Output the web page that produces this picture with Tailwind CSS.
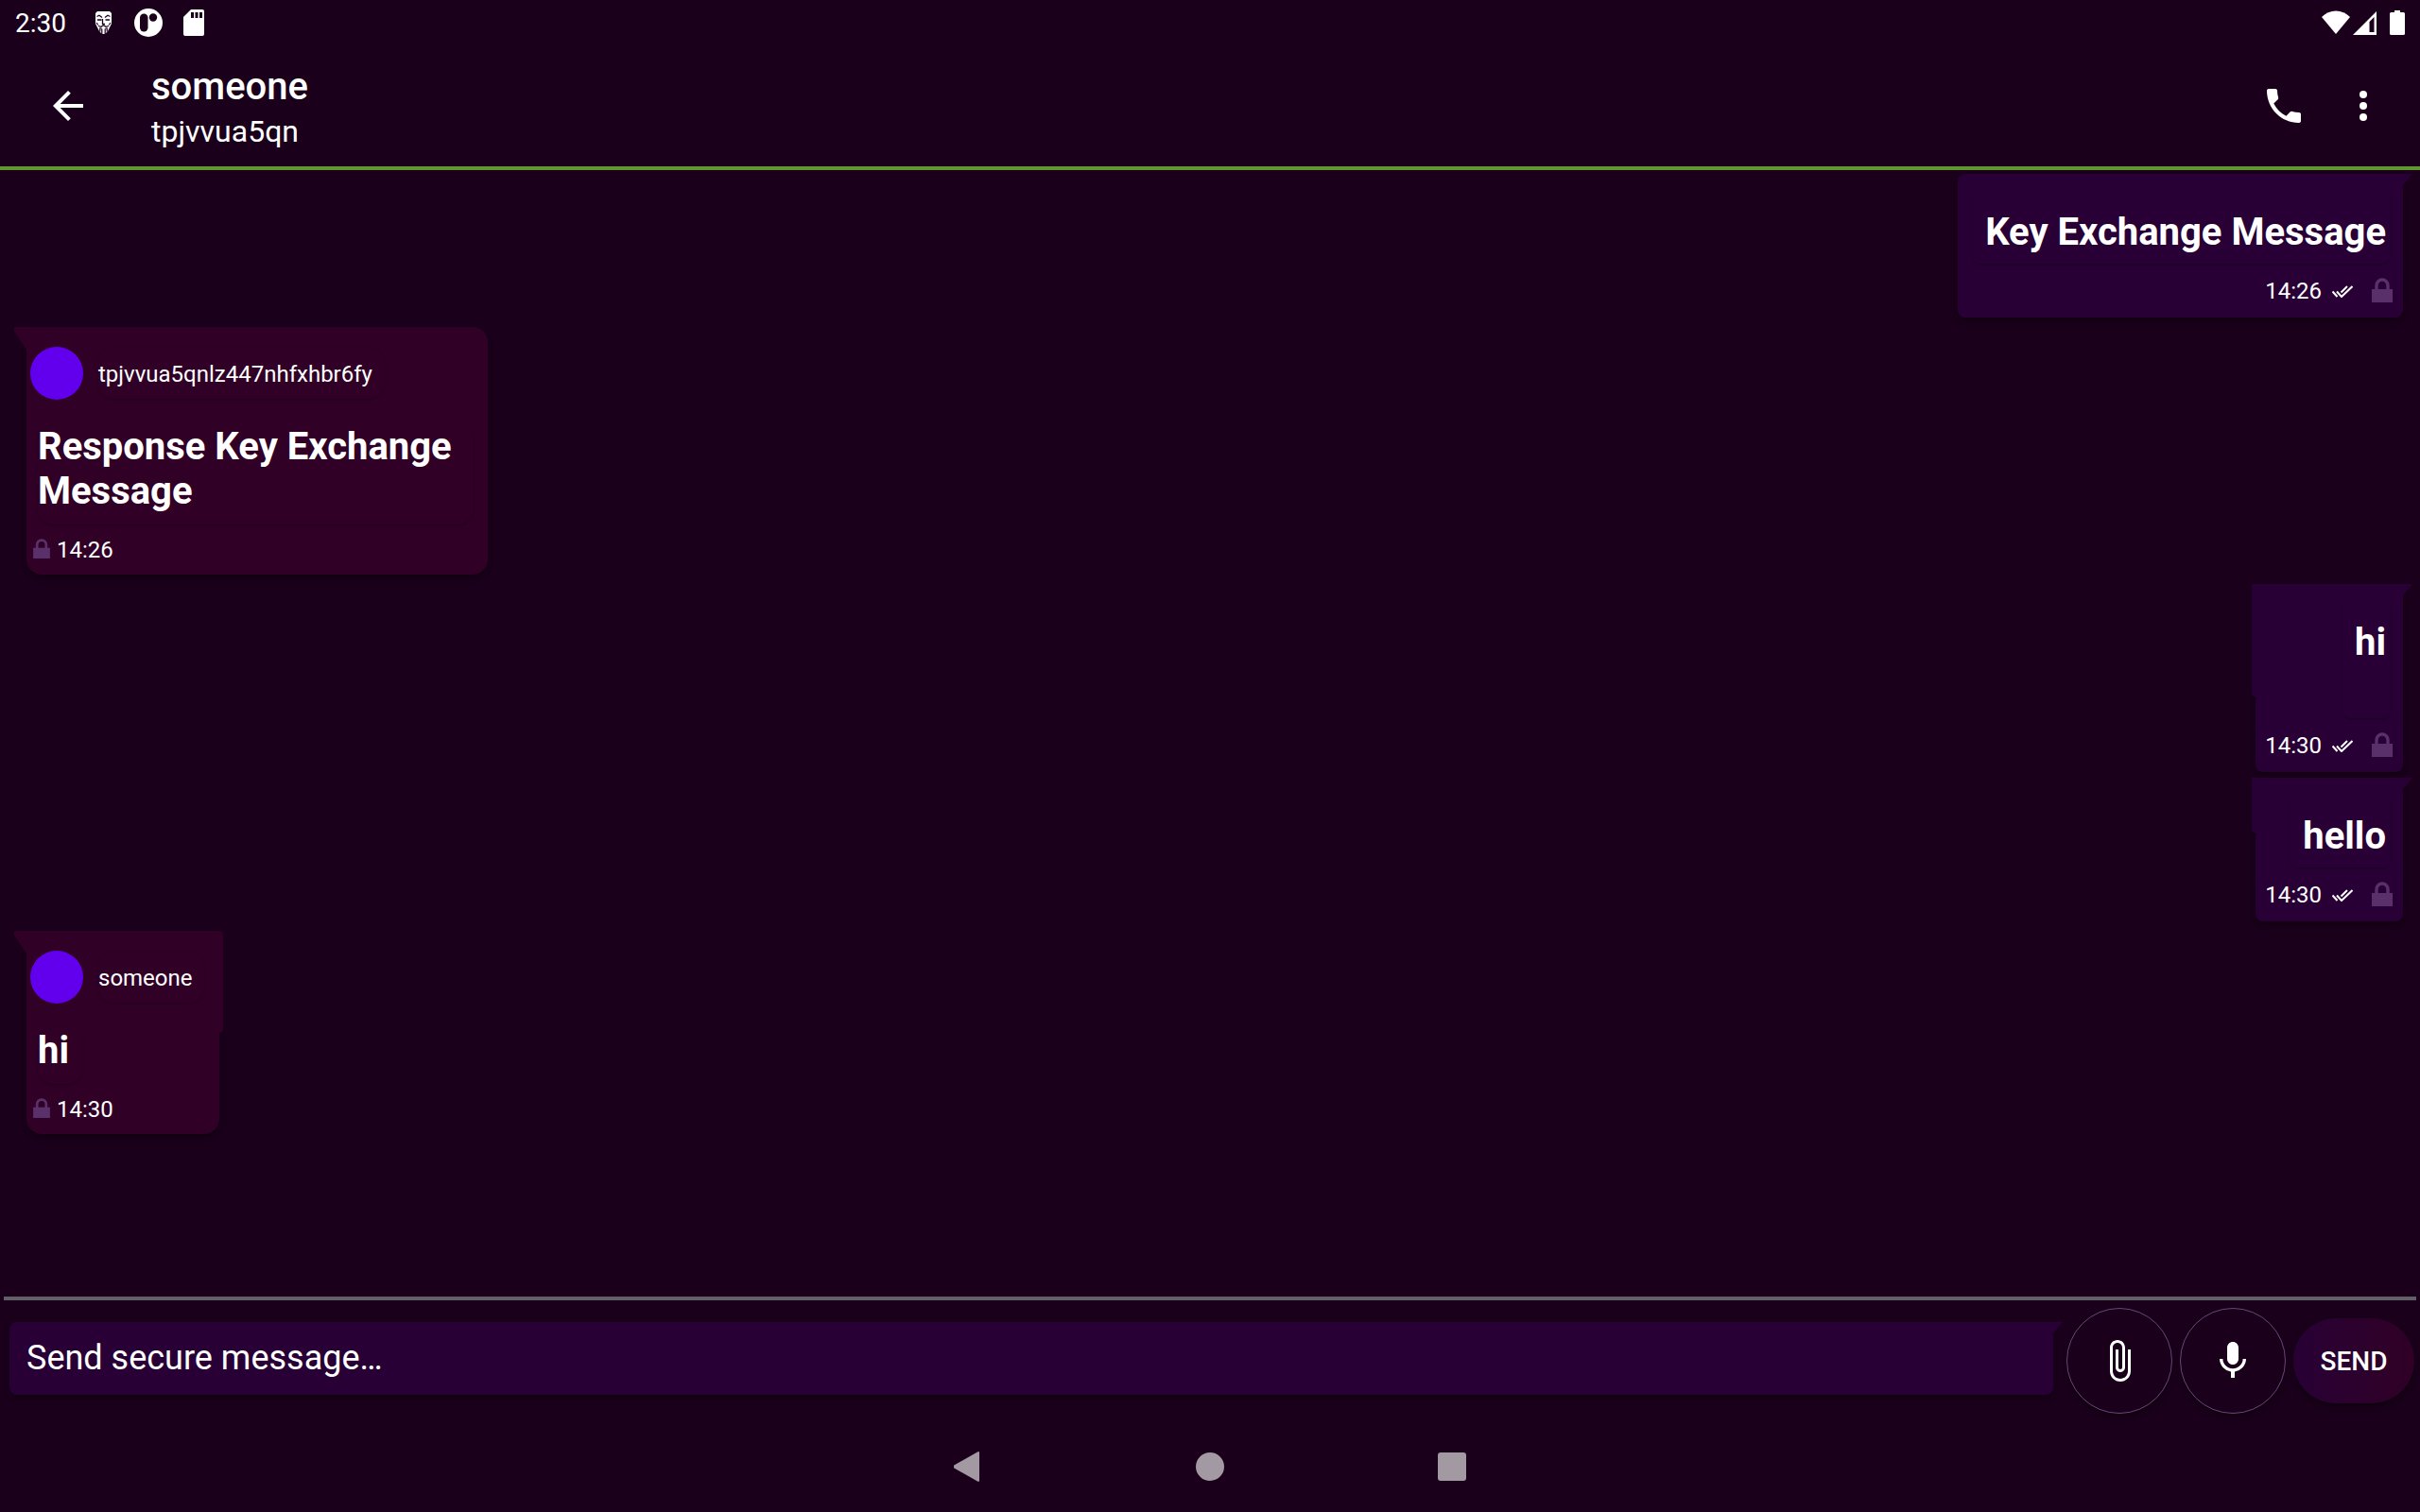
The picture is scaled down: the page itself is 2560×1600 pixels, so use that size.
<!DOCTYPE html>
<html lang="en">
<head>
<meta charset="utf-8">
<meta name="viewport" content="width=device-width, initial-scale=1">
<title>someone</title>
<script src="https://cdn.jsdelivr.net/npm/@tailwindcss/browser@4"></script>
</head>
<body class="bg-[#1a001b] text-white font-[Roboto,sans-serif]">
<svg class="hidden" aria-hidden="true">
  <symbol id="lock" viewBox="0 0 22 26"><path d="M0 12h22v14H0z"/><path d="M5 13V8a6 6 0 0 1 12 0v5" fill="none" stroke="currentColor" stroke-width="3.4"/></symbol>
  <symbol id="ticks" viewBox="0 0 22 13"><path d="M.5 6.500l5 5.500M5 6.500l5 5.500L21.500 1M9.500 7.500L16 1" fill="none" stroke="currentColor" stroke-width="2"/></symbol>
</svg>
<div class="min-h-screen flex flex-col">

  <div class="h-12 px-4 flex items-center justify-between">
    <div class="flex items-center">
      <time class="pt-[2px] text-[28px] leading-8 w-[85px]">2:30</time>
      <svg class="w-[17px] h-6 mr-6" viewBox="0 0 17 24" role="img" aria-label="Secure service"><path fill="#fff" d="M2 0h13l2 2v11l-2 4-2 4-3 3H7l-3-3-2-4-2-4V2z"/><g fill="none" stroke="#1a001b"><path stroke-width="1.300" d="M1.500 5.500L4 4.200l3 2.300M15.500 5.500L13 4.200l-3 2.300M2 9h4.500M10.500 9H15M7.500 8v5.500h2.500"/><path stroke-width="1.200" d="M1 12l2 2.500M16 12l-2 2.500M3 15.500l3 .8 2.500-1.500 2.500 1.500 3-.8M4 18.200h2.500M10.500 18.200H13M6.800 18.500V24M10.200 18.500V24M4.800 19v2.500M12.200 19v2.500"/></g></svg>
      <svg class="w-[30px] h-[30px] mr-[22px]" viewBox="0 0 30 30" role="img" aria-label="App notification"><circle cx="15" cy="15" r="15" fill="#fff"/><rect x="6" y="5.500" width="8.500" height="19" rx="4.200" fill="#1a001b"/><circle cx="20" cy="9.500" r="4.200" fill="#1a001b"/></svg>
      <svg class="w-[22px] h-7" viewBox="0 0 22 28" role="img" aria-label="SD card"><path d="M8 0h12a2 2 0 0 1 2 2v24a2 2 0 0 1-2 2H2a2 2 0 0 1-2-2V8z" fill="#fff"/><path d="M8 3h3v6H8zM12.500 3h3v6h-3zM17 3h3v6h-3z" fill="#1a001b"/></svg>
    </div>
    <div class="flex items-center">
      <svg class="w-[30px] h-[26px] mr-[3px]" viewBox="0 0 30 26" fill="#fff" role="img" aria-label="Wi-Fi"><path d="M15 25L0 7Q6.500 .5 15 .5T30 7z"/></svg>
      <svg class="w-[25px] h-[26px] mr-[14px]" viewBox="0 0 25 26" fill="#fff" role="img" aria-label="Signal"><path fill-rule="evenodd" d="M25 1v25H0zM22.500 7l-5 5v11h5z"/></svg>
      <svg class="w-4 h-[26px]" viewBox="0 0 16 26" fill="#fff" role="img" aria-label="Battery"><path d="M5 0h6v2h3.500a1.500 1.500 0 0 1 1.500 1.500v21a1.500 1.500 0 0 1-1.500 1.500h-13A1.500 1.500 0 0 1 0 24.500v-21A1.500 1.500 0 0 1 1.500 2H5z"/></svg>
    </div>
  </div>

  <header class="h-[132px] border-b-4 border-[#5f962f] pl-12 pr-9 flex items-center">
    <button class="w-12 h-12 mr-16" aria-label="Back"><svg class="w-12 h-12" viewBox="0 0 24 24" fill="#fff"><path d="M20 11H7.830l5.590-5.590L12 4l-8 8 8 8 1.410-1.410L7.830 13H20v-2z"/></svg></button>
    <div class="flex-1 pt-1">
      <h1 class="text-[40px] leading-[50px] font-medium">someone</h1>
      <p class="text-[32px] leading-[44px]">tpjvvua5qn</p>
    </div>
    <button class="w-12 h-12 mr-9" aria-label="Call"><svg class="w-12 h-12" viewBox="0 0 24 24" fill="#fff"><path d="M6.620 10.790c1.440 2.830 3.760 5.140 6.590 6.590l2.200-2.200c.27-.27.67-.36 1.020-.24 1.120.37 2.330.57 3.570.57.55 0 1 .45 1 1V20c0 .55-.45 1-1 1-9.390 0-17-7.610-17-17 0-.55.45-1 1-1h3.500c.55 0 1 .45 1 1 0 1.250.2 2.450.57 3.570.11.35.03.74-.25 1.020l-2.200 2.200z"/></svg></button>
    <button class="w-12 h-12" aria-label="More options"><svg class="w-12 h-12" viewBox="0 0 24 24" fill="#fff"><circle cx="12" cy="6" r="2"/><circle cx="12" cy="12" r="2"/><circle cx="12" cy="18" r="2"/></svg></button>
  </header>

  <main class="flex-1 flex flex-col items-start gap-[10px] pt-1 pl-7 pr-[18px]">
    <article class="self-end relative flex flex-col items-end rounded-b-lg rounded-tl-lg bg-[#280035] pt-[18px] pb-[14px] pl-4 shadow-md shadow-black/30">
      <span class="absolute top-0 left-full w-[10px] h-3 bg-[#280035] [clip-path:polygon(0_0,100%_0,0_100%)]"></span>
      <p class="mr-[14px] rounded-lg pt-5 pb-[10px] pl-[13px] pr-1 text-[40px] leading-[47px] font-bold text-right shadow-sm shadow-black/20">Key Exchange Message</p>
      <footer class="mt-[15px] pr-[11px] flex items-center text-2xl leading-7">
        <time>14:26</time>
        <svg class="w-[22px] h-[13px] ml-[11px] mr-5" role="img" aria-label="Delivered"><use href="#ticks"/></svg>
        <svg class="w-[22px] h-[26px] mb-[2px] text-[#5a306b] fill-current" role="img" aria-label="Encrypted"><use href="#lock"/></svg>
      </footer>
    </article>

    <article class="relative w-[488px] rounded-b-2xl rounded-tr-2xl bg-[#300026] pt-[21px] pb-3 shadow-md shadow-black/30">
      <span class="absolute top-0 right-full w-[13px] h-6 bg-[#300026] [clip-path:polygon(0_0,100%_0,100%_100%,0_20%)]"></span>
      <div class="pl-1 flex items-center text-2xl leading-7"><span class="size-14 mr-4 rounded-full bg-[#6200ee]"></span><span class="rounded-2xl pt-[14px] pb-3 pr-3 shadow-sm shadow-black/20">tpjvvua5qnlz447nhfxhbr6fy</span></div>
      <p class="mt-[26px] ml-3 mr-4 pb-3 rounded-2xl text-[40px] leading-[47px] font-bold shadow-sm shadow-black/20">Response Key Exchange Message</p>
      <footer class="mt-[13px] pl-[7px] flex items-center gap-[7px] text-2xl leading-7">
        <svg class="w-[18px] h-[21px] mb-1 text-[#5a306b] fill-current" viewBox="0 0 22 26" role="img" aria-label="Encrypted"><use href="#lock"/></svg>
        <time>14:26</time>
      </footer>
    </article>

    <div class="self-end flex flex-col items-end gap-[6px]">
      <article class="relative w-[156px] flex flex-col items-end rounded-b-lg bg-[#280035] pt-[18px] pb-[14px] shadow-md shadow-black/30">
        <span class="absolute top-0 left-full w-[10px] h-3 bg-[#280035] [clip-path:polygon(0_0,100%_0,0_100%)]"></span>
        <span class="absolute top-0 right-full w-1 h-[119px] rounded-bl bg-[#280035]"></span>
        <p class="mr-[14px] rounded-lg pt-5 pb-[57px] pl-[13px] pr-1 text-[40px] leading-[47px] font-bold text-right shadow-sm shadow-black/20">hi</p>
        <footer class="mt-[15px] pr-[11px] flex items-center text-2xl leading-7">
          <time>14:30</time>
          <svg class="w-[22px] h-[13px] ml-[11px] mr-5" role="img" aria-label="Delivered"><use href="#ticks"/></svg>
          <svg class="w-[22px] h-[26px] mb-[2px] text-[#5a306b] fill-current" role="img" aria-label="Encrypted"><use href="#lock"/></svg>
        </footer>
      </article>
      <article class="relative w-[156px] flex flex-col items-end rounded-b-lg bg-[#280035] pt-[18px] pb-[14px] shadow-md shadow-black/30">
        <span class="absolute top-0 left-full w-[10px] h-3 bg-[#280035] [clip-path:polygon(0_0,100%_0,0_100%)]"></span>
        <span class="absolute top-0 right-full w-1 h-[58px] rounded-bl bg-[#280035]"></span>
        <p class="mr-[14px] rounded-lg pt-5 pb-[10px] pl-[13px] pr-1 text-[40px] leading-[47px] font-bold text-right shadow-sm shadow-black/20">hello</p>
        <footer class="mt-[15px] pr-[11px] flex items-center text-2xl leading-7">
          <time>14:30</time>
          <svg class="w-[22px] h-[13px] ml-[11px] mr-5" role="img" aria-label="Delivered"><use href="#ticks"/></svg>
          <svg class="w-[22px] h-[26px] mb-[2px] text-[#5a306b] fill-current" role="img" aria-label="Encrypted"><use href="#lock"/></svg>
        </footer>
      </article>
    </div>

    <article class="relative w-[204px] rounded-b-2xl bg-[#300026] pt-[21px] pb-3 shadow-md shadow-black/30">
      <span class="absolute top-0 right-full w-[13px] h-6 bg-[#300026] [clip-path:polygon(0_0,100%_0,100%_100%,0_20%)]"></span>
      <span class="absolute top-0 left-full w-1 h-[108px] rounded-r bg-[#300026]"></span>
      <div class="pl-1 flex items-center text-2xl leading-7"><span class="size-14 mr-4 rounded-full bg-[#6200ee]"></span><span class="rounded-2xl pt-[14px] pb-3 pr-3 shadow-sm shadow-black/20">someone</span></div>
      <p class="mt-[26px] ml-3 w-fit pb-3 pr-[14px] rounded-2xl text-[40px] leading-[47px] font-bold shadow-sm shadow-black/20">hi</p>
      <footer class="mt-[13px] pl-[7px] flex items-center gap-[7px] text-2xl leading-7">
        <svg class="w-[18px] h-[21px] mb-1 text-[#5a306b] fill-current" viewBox="0 0 22 26" role="img" aria-label="Encrypted"><use href="#lock"/></svg>
        <time>14:30</time>
      </footer>
    </article>
  </main>

  <form class="mx-1 h-[132px] border-t-4 border-[#625f68] pl-[6px] pr-[2px] flex items-center">
    <div class="relative flex-1 mr-[14px] mb-[5px]">
      <input type="text" aria-label="Message" placeholder="Send secure message…" class="block w-full h-[77px] pl-[18px] pb-[2px] rounded-b-lg rounded-tl-lg bg-[#280035] text-4xl placeholder:text-white outline-none shadow-md shadow-black/30">
      <span class="absolute top-0 left-full w-[10px] h-3 bg-[#280035] [clip-path:polygon(0_0,100%_0,0_100%)]"></span>
    </div>
    <button type="button" class="size-28 mr-2 rounded-full border border-[#6b4579] flex items-center justify-center shadow-md shadow-black/30" aria-label="Attach"><svg class="size-12" viewBox="0 0 24 24" fill="#fff"><path d="M16.500 6v11.500c0 2.210-1.790 4-4 4s-4-1.790-4-4V5c0-1.380 1.120-2.500 2.500-2.500s2.500 1.120 2.500 2.500v10.500c0 .55-.45 1-1 1s-1-.45-1-1V6H10v9.500c0 1.380 1.120 2.500 2.500 2.500s2.500-1.120 2.500-2.500V5c0-2.210-1.790-4-4-4S7 2.790 7 5v12.500c0 3.040 2.460 5.500 5.500 5.500s5.500-2.460 5.500-5.500V6h-1.500z"/></svg></button>
    <button type="button" class="size-28 mr-2 rounded-full border border-[#6b4579] flex items-center justify-center shadow-md shadow-black/30" aria-label="Record voice"><svg class="size-12" viewBox="0 0 24 24" fill="#fff"><path d="M12 14c1.660 0 3-1.340 3-3V5c0-1.660-1.340-3-3-3S9 3.340 9 5v6c0 1.660 1.340 3 3 3zM17.300 11c0 3-2.540 5.100-5.300 5.100S6.700 14 6.700 11H5c0 3.410 2.720 6.230 6 6.720V21h2v-3.280c3.280-.48 6-3.300 6-6.720h-1.700z"/></svg></button>
    <button type="submit" class="w-32 h-[90px] pt-[2px] rounded-full bg-linear-to-r from-[#280035] to-[#300026] text-[28px] font-medium shadow-md shadow-black/40">SEND</button>
  </form>

  <nav class="h-24 flex items-center justify-center gap-[226px] text-[#a399a3]">
    <button class="w-[30px]" aria-label="Back"><svg class="w-[30px] h-8" viewBox="0 0 30 32" fill="currentColor"><path d="M.3 14.600L25 .4q2-1 2 1v29.200q0 2-2 1L.3 17.400q-1.600-1.400 0-2.800z"/></svg></button>
    <button class="size-[30px] rounded-full bg-current" aria-label="Home"></button>
    <button class="size-[30px] rounded-[3px] bg-current" aria-label="Recent apps"></button>
  </nav>
</div>
</body>
</html>
